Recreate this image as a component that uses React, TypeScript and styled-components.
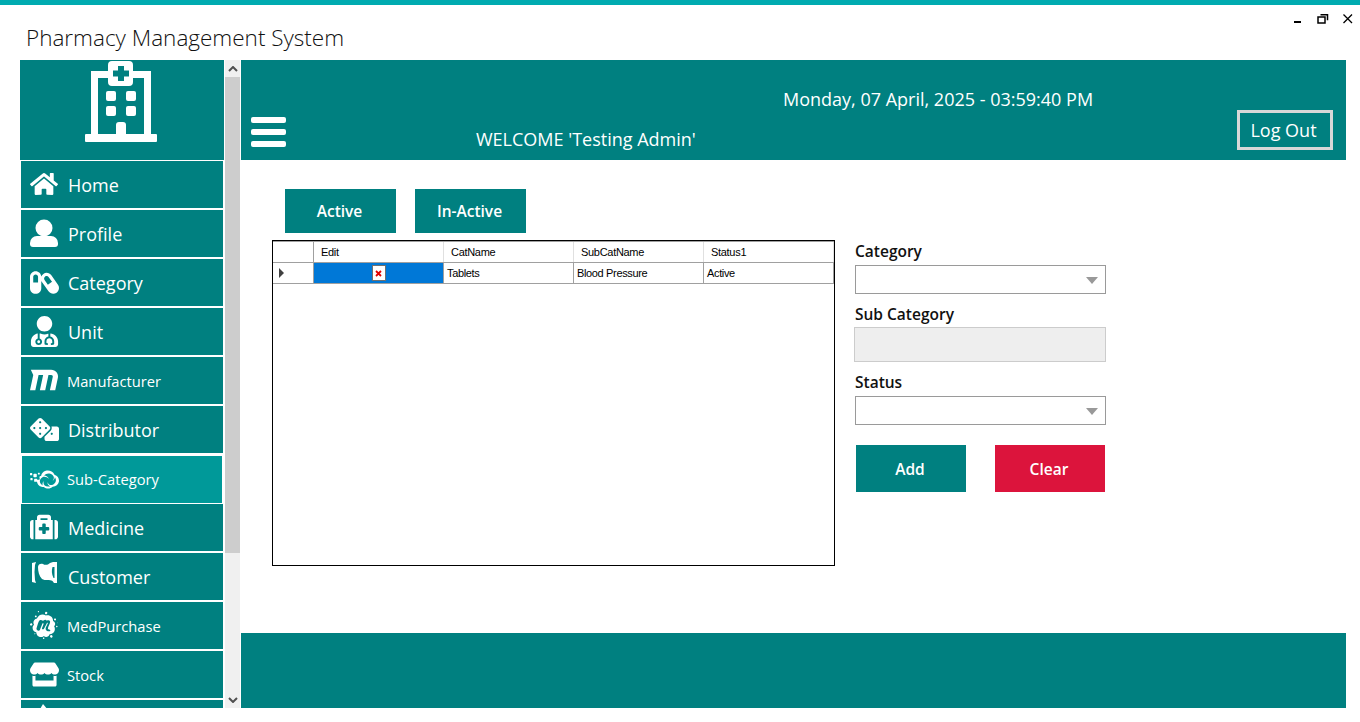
import React from "react";
import styled, { createGlobalStyle } from "styled-components";
import {
  FaHome,
  FaCapsules,
  FaUserMd,
  FaMaxcdn,
  FaDice,
  FaCloudversify,
  FaMedkit,
  FaMeetup,
  FaStore,
} from "react-icons/fa";

const TEAL = "#008080";
const FONT = `"Open Sans", "Noto Sans", sans-serif`;

const GlobalStyle = createGlobalStyle`
  html, body {
    margin: 0;
    padding: 0;
    background: #fff;
  }
  body {
    width: 1360px;
    height: 722px;
    overflow: hidden;
    font-family: ${FONT};
  }
  * {
    box-sizing: border-box;
  }
`;

function HospitalLogo() {
  return (
    <svg width="72" height="82" viewBox="0 0 72 82" fill="#fff">
      <path d="M6 11h18v7H13v56h46V18H48v-7h18v63H6z" />
      <path
        fillRule="evenodd"
        d="M27 1h17a4 4 0 0 1 4 4v17a4 4 0 0 1-4 4H27a4 4 0 0 1-4-4V5a4 4 0 0 1 4-4zM33 6v4.500h-5v6h5V21h6v-4.500h5v-6h-5V6z"
      />
      <rect x="21" y="31" width="10" height="10" rx="2" />
      <rect x="41" y="31" width="10" height="10" rx="2" />
      <rect x="21" y="46" width="10" height="10" rx="2" />
      <rect x="41" y="46" width="10" height="10" rx="2" />
      <path d="M31 74V65a3 3 0 0 1 3-3h4a3 3 0 0 1 3 3v9z" />
      <rect x="0" y="74" width="72" height="8" rx="1" />
    </svg>
  );
}

function ProfileIcon() {
  return (
    <svg width="28" height="28" viewBox="0 0 28 28" fill="#fff">
      <circle cx="14" cy="9" r="8.500" />
      <path d="M0 24a7 7 0 0 1 7-7h14a7 7 0 0 1 7 7v1a3 3 0 0 1-3 3H3a3 3 0 0 1-3-3z" />
    </svg>
  );
}

function ToothBracket() {
  return (
    <svg width="28" height="28" viewBox="0 0 28 28" fill="#fff">
      <path d="M2 1l4-1-1 3-.5 7 .5 8 1 3-4-1z" />
      <path
        fillRule="evenodd"
        d="M8 5c0-3 3-4 5-3 2 1.500 5 1 7-1l3-1h4v21h-3l-1.500-2c-2.500-2-7.500 0-10.500-2C9 14 8 9 8 5zM22.500 5c-1 3-1 7 1 11h1V5z"
      />
    </svg>
  );
}

function PeakIcon() {
  return (
    <svg width="28" height="28" viewBox="0 0 28 28" fill="#fff">
      <path d="M13 0l10 12H6z" />
    </svg>
  );
}

function MenuIcon() {
  return (
    <svg width="36" height="31" viewBox="0 0 36 31" fill="#fff">
      <rect x="0" y="0" width="35" height="6" rx="2" />
      <rect x="0" y="12" width="35" height="6" rx="2" />
      <rect x="0" y="24" width="35" height="6" rx="2" />
    </svg>
  );
}

type Item = {
  label: string;
  icon: React.ReactNode;
  small?: boolean;
  active?: boolean;
  raised?: boolean;
};

const items: Item[] = [
  { label: "Home", icon: <FaHome size={28} /> },
  { label: "Profile", icon: <ProfileIcon /> },
  { label: "Category", icon: <FaCapsules size={29} /> },
  { label: "Unit", icon: <FaUserMd size={31} /> },
  { label: "Manufacturer", icon: <FaMaxcdn size={28} />, small: true },
  { label: "Distributor", icon: <FaDice size={29} /> },
  { label: "Sub-Category", icon: <FaCloudversify size={29} />, small: true, active: true },
  { label: "Medicine", icon: <FaMedkit size={28} /> },
  { label: "Customer", icon: <ToothBracket /> },
  { label: "MedPurchase", icon: <FaMeetup size={28} />, small: true },
  { label: "Stock", icon: <FaStore size={29} />, small: true },
  // the next entry is scrolled out of view, only the tip of its icon shows
  { label: "", icon: <PeakIcon />, raised: true },
];

const columns = ["Edit", "CatName", "SubCatName", "Status1"];

function App() {
  return (
    <Page>
      <GlobalStyle />
      <AccentBar />
      <TitleRow>
        <Title>Pharmacy Management System</Title>
        <WindowButtons>
          <svg width="60" height="14" viewBox="0 0 60 14" fill="none" stroke="#000">
            <path d="M0 8h7" strokeWidth="2" />
            <rect x="24" y="3" width="7" height="6" strokeWidth="1.500" />
            <path d="M26.500 .8h7v5.500" strokeWidth="1.500" />
            <path d="M49.500 .5l8.500 8.500M58 .5l-8.500 8.500" strokeWidth="1.300" />
          </svg>
        </WindowButtons>
      </TitleRow>
      <Main>
        <Sidebar>
          <LogoPanel>
            <HospitalLogo />
          </LogoPanel>
          <Menu>
            {items.map((item, i) => (
              <MenuItem key={i} $active={item.active}>
                <IconSlot $raised={item.raised} $active={item.active}>
                  {item.icon}
                </IconSlot>
                {item.label && (
                  <MenuLabel $small={item.small} $active={item.active}>
                    {item.label}
                  </MenuLabel>
                )}
              </MenuItem>
            ))}
          </Menu>
        </Sidebar>
        <ScrollBar>
          <ScrollArrow>
            <svg width="10" height="6" viewBox="0 0 10 6" fill="none" stroke="#505050" strokeWidth="2">
              <path d="M1 5l4-4 4 4" />
            </svg>
          </ScrollArrow>
          <ScrollThumb />
          <ScrollArrow>
            <svg width="10" height="6" viewBox="0 0 10 6" fill="none" stroke="#505050" strokeWidth="2">
              <path d="M1 1l4 4 4-4" />
            </svg>
          </ScrollArrow>
        </ScrollBar>
        <Content>
          <Header>
            <HeaderLeft>
              <MenuIcon />
              <Welcome>WELCOME 'Testing Admin'</Welcome>
            </HeaderLeft>
            <DateText>Monday, 07 April, 2025 - 03:59:40 PM</DateText>
            <LogOut>Log Out</LogOut>
          </Header>
          <Body>
            <LeftColumn>
              <FilterRow>
                <ActionButton>Active</ActionButton>
                <ActionButton>In-Active</ActionButton>
              </FilterRow>
              <Grid>
                <HeaderRow>
                  <RowHead />
                  {columns.map((c) => (
                    <HeadCell key={c}>{c}</HeadCell>
                  ))}
                </HeaderRow>
                <DataRow>
                  <RowHead>
                    <RowMarker />
                  </RowHead>
                  <EditCell>
                    <BrokenImage>
                      <svg width="7" height="7" viewBox="0 0 7 7" stroke="#e00000" strokeWidth="1.800">
                        <path d="M1 1l5 5M6 1L1 6" />
                      </svg>
                    </BrokenImage>
                  </EditCell>
                  <DataCell>Tablets</DataCell>
                  <DataCell>Blood Pressure</DataCell>
                  <DataCell>Active</DataCell>
                </DataRow>
              </Grid>
            </LeftColumn>
            <Form>
              <FieldLabel>Category</FieldLabel>
              <Select>
                <Caret />
              </Select>
              <SubLabel>Sub Category</SubLabel>
              <DisabledInput />
              <StatusLabel>Status</StatusLabel>
              <Select>
                <Caret />
              </Select>
              <FormButtons>
                <FormButton>Add</FormButton>
                <FormButton $danger>Clear</FormButton>
              </FormButtons>
            </Form>
          </Body>
          <Footer />
        </Content>
      </Main>
    </Page>
  );
}

const Page = styled.div`
  width: 1360px;
  height: 722px;
  display: flex;
  flex-direction: column;
  background: #fff;
`;

const AccentBar = styled.div`
  height: 5px;
  background: #00abb0;
`;

const TitleRow = styled.div`
  height: 55px;
  display: flex;
  justify-content: space-between;
  padding: 6px 6px 0 26px;
`;

const Title = styled.div`
  font-size: 22.500px;
  font-weight: 300;
  line-height: 44px;
  margin-top: 5px;
  color: #111;
`;

const WindowButtons = styled.div`
  height: 14px;
`;

const Main = styled.div`
  height: 648px;
  display: flex;
  padding: 0 14px 0 20px;
`;

const Sidebar = styled.div`
  width: 204px;
  overflow: hidden;
`;

const LogoPanel = styled.div`
  height: 100px;
  background: ${TEAL};
  display: flex;
  justify-content: center;
  align-items: flex-start;
  padding-right: 2px;
`;

const Menu = styled.div`
  display: flex;
  flex-direction: column;
  gap: 2px;
  padding: 1px 1px 0;
`;

const MenuItem = styled.div<{ $active?: boolean }>`
  flex: 0 0 47px;
  margin: ${(p) => (p.$active ? "1px 1px -1px" : "0")};
  display: flex;
  align-items: flex-start;
  background: ${(p) => (p.$active ? "#009999" : TEAL)};
  color: #fff;
`;

const IconSlot = styled.div<{ $raised?: boolean; $active?: boolean }>`
  width: 46px;
  height: 32px;
  margin-top: ${(p) => (p.$raised ? "4px" : "7px")};
  margin-left: ${(p) => (p.$active ? "-1px" : "0")};
  display: flex;
  align-items: ${(p) => (p.$raised ? "flex-start" : "center")};
  justify-content: center;
  flex-shrink: 0;
`;

const MenuLabel = styled.span<{ $small?: boolean; $active?: boolean }>`
  font-size: ${(p) => (p.$small ? "14.700px" : "18px")};
  line-height: 24px;
  margin-top: ${(p) => (p.$active ? "11px" : "12px")};
  margin-left: ${(p) => (p.$small ? "0" : "1px")};
`;

const ScrollBar = styled.div`
  width: 15px;
  margin: 0 1px;
  background: #f0f0f0;
  display: flex;
  flex-direction: column;
`;

const ScrollArrow = styled.div`
  height: 17px;
  display: flex;
  align-items: center;
  justify-content: center;
`;

const ScrollThumb = styled.div`
  height: 476px;
  background: #cdcdcd;
  margin-bottom: auto;
`;

const Content = styled.div`
  flex: 1;
  display: flex;
  flex-direction: column;
`;

const Header = styled.div`
  height: 100px;
  background: ${TEAL};
  color: #fff;
  display: flex;
  padding: 0 13px 0 10px;
`;

const HeaderLeft = styled.div`
  width: 532px;
  display: flex;
  align-items: flex-start;
  padding-top: 57px;
`;

const Welcome = styled.div`
  margin: 10px 0 0 189px;
  font-size: 18px;
  line-height: 24px;
  white-space: nowrap;
`;

const DateText = styled.div`
  margin-top: 27px;
  font-size: 18px;
  line-height: 25px;
  white-space: nowrap;
`;

const LogOut = styled.div`
  margin: 50px 0 0 auto;
  width: 96px;
  height: 40px;
  border: 3px solid #d8d8d8;
  font-size: 18px;
  line-height: 34px;
  text-align: center;
  padding-right: 3px;
`;

const Body = styled.div`
  height: 473px;
  display: flex;
  padding: 29px 0 0 31px;
`;

const LeftColumn = styled.div`
  width: 563px;
`;

const FilterRow = styled.div`
  display: flex;
  gap: 19px;
  padding-left: 13px;
`;

const ActionButton = styled.div`
  width: 111px;
  height: 44px;
  background: ${TEAL};
  color: #fff;
  font-size: 15.500px;
  font-weight: 600;
  display: flex;
  align-items: center;
  justify-content: center;
  padding-right: 2px;
`;

const Grid = styled.div`
  margin-top: 7px;
  height: 326px;
  border: 1px solid #000;
`;

const HeaderRow = styled.div`
  display: grid;
  grid-template-columns: 41px 130px 130px 130px 130px;
  height: 21px;
  border-top: 1px solid #a0a0a0;
`;

const DataRow = styled(HeaderRow)`
  height: 22px;
  border-top: 1px solid #a0a0a0;
  border-bottom: 1px solid #a0a0a0;
`;

const RowHead = styled.div`
  background: #fff;
  border-right: 1px solid #a0a0a0;
  display: flex;
  align-items: center;
  padding-left: 6px;
`;

const RowMarker = styled.div`
  width: 0;
  height: 0;
  border-left: 5px solid #404040;
  border-top: 5px solid transparent;
  border-bottom: 5px solid transparent;
`;

const HeadCell = styled.div`
  border-right: 1px solid #e0e0e0;
  padding-left: 7px;
  font-family: "Liberation Sans", Arial, sans-serif;
  font-size: 11px;
  line-height: 20px;
  letter-spacing: -0.3px;
  color: #000;
`;

const DataCell = styled.div`
  border-right: 1px solid #a0a0a0;
  padding-left: 3px;
  font-family: "Liberation Sans", Arial, sans-serif;
  font-size: 11px;
  line-height: 20px;
  letter-spacing: -0.35px;
  color: #000;
`;

const EditCell = styled.div`
  background: #0078d7;
  border-right: 1px solid #a0a0a0;
  display: flex;
  align-items: center;
  justify-content: center;
`;

const BrokenImage = styled.div`
  width: 14px;
  height: 16px;
  background: #fff;
  border: 1px solid #707070;
  display: flex;
  align-items: center;
  justify-content: center;
`;

const Form = styled.div`
  width: 251px;
  margin-left: 20px;
  padding-top: 51px;
`;

const FieldLabel = styled.div`
  font-size: 15.500px;
  font-weight: 600;
  line-height: 22px;
  color: #111;
  margin-bottom: 3px;
`;

const SubLabel = styled(FieldLabel)`
  margin: 9px 0 2px;
`;

const StatusLabel = styled(FieldLabel)`
  margin: 9px 0 3px;
`;

const Select = styled.div`
  height: 29px;
  border: 1px solid #9a9a9a;
  background: #fff;
  position: relative;
`;

const Caret = styled.div`
  position: absolute;
  right: 7px;
  top: 11px;
  width: 0;
  height: 0;
  border-left: 6px solid transparent;
  border-right: 6px solid transparent;
  border-top: 7px solid #999;
`;

const DisabledInput = styled.div`
  height: 35px;
  background: #eeeeee;
  border: 1px solid #cccccc;
  margin-left: -1px;
`;

const FormButtons = styled.div`
  display: flex;
  justify-content: space-between;
  margin: 20px 1px 0;
`;

const FormButton = styled.div<{ $danger?: boolean }>`
  width: 110px;
  height: 47px;
  background: ${(p) => (p.$danger ? "#dc143c" : TEAL)};
  color: #fff;
  font-size: 15.500px;
  font-weight: 600;
  display: flex;
  align-items: center;
  justify-content: center;
  padding-right: 2px;
`;

const Footer = styled.div`
  flex: 1;
  background: ${TEAL};
`;

export default App;
